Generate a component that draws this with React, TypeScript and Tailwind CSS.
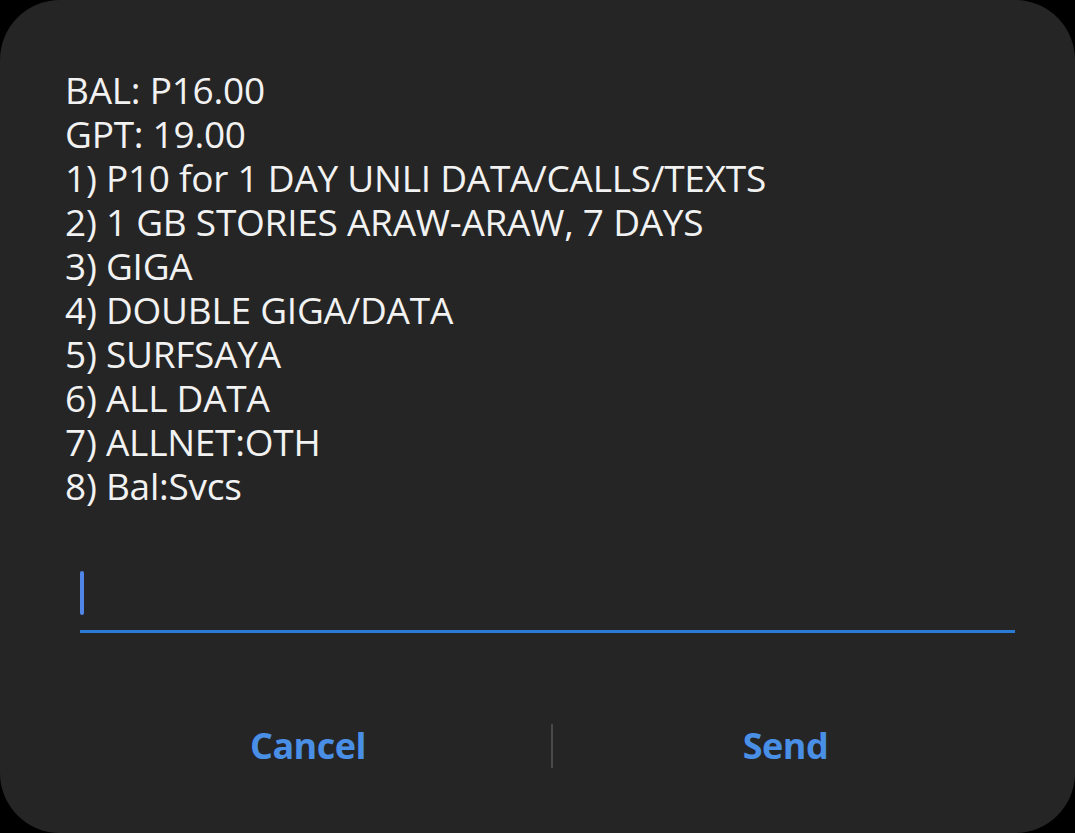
import { useState } from 'react'

const lines = [
  'BAL: P16.00',
  'GPT: 19.00',
  '1) P10 for 1 DAY UNLI DATA/CALLS/TEXTS',
  '2) 1 GB STORIES ARAW-ARAW, 7 DAYS',
  '3) GIGA',
  '4) DOUBLE GIGA/DATA',
  '5) SURFSAYA',
  '6) ALL DATA',
  '7) ALLNET:OTH',
  '8) Bal:Svcs',
]

export default function App() {
  const [reply, setReply] = useState('')

  return (
    <div className="w-[1075px] h-[833px] bg-black">
      <div className="w-full h-full bg-[#252525] rounded-[60px] flex flex-col font-['Open_Sans',sans-serif]">
        {/* USSD message */}
        <div className="pl-[65px] pt-[68px] text-[37px] leading-[44px] text-[#f2f2f2] font-medium tracking-[-0.25px]">
          {lines.map((l) => (
            <div key={l}>{l}</div>
          ))}
        </div>

        {/* Reply input */}
        <div className="ml-[80px] mr-[60px] mt-[61px] border-b-[3px] border-[#2b7bd6] h-[64px] flex items-start">
          <div className="w-[4px] h-[44px] mt-[2px] bg-[#4f86e8] rounded-sm" />
          <input
            value={reply}
            onChange={(e) => setReply(e.target.value)}
            className="flex-1 bg-transparent outline-none text-white text-[36px]"
          />
        </div>

        {/* Buttons */}
        <div className="mt-[86px] pl-[65px] pr-[57px] flex items-center">
          <button className="w-[486px] text-center text-[36px] font-bold text-[#4a8fe6] tracking-[-0.5px]">
            Cancel
          </button>
          <div className="w-[2px] h-[44px] bg-[#4a4a4a]" />
          <button className="flex-1 text-center text-[36px] font-bold text-[#4a8fe6] tracking-[-0.5px]">
            Send
          </button>
        </div>
      </div>
    </div>
  )
}
